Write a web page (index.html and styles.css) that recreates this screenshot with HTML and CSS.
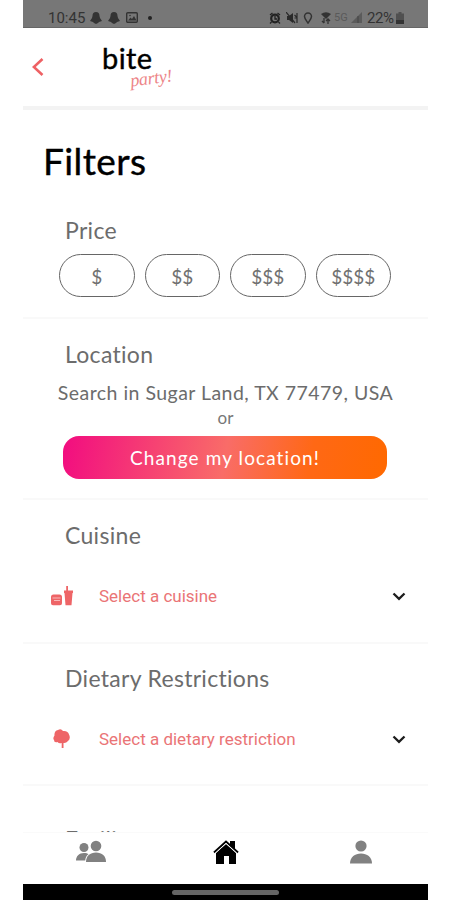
FILE: index.html
```html
<!DOCTYPE html>
<html lang="en">
<head>
  <meta charset="UTF-8" />
  <meta name="viewport" content="width=device-width, initial-scale=1.0" />
  <title>Bite Party - Filters</title>
  <link rel="stylesheet" href="styles.css">
</head>
<body>
  <div class="phone">
    <div class="status-bar">
      <span class="time">10:45</span>
      <svg class="bell" viewBox="0 0 12 12"><path d="M6 0C3.700 0 2.500 1.500 2.500 4L2 6 0 9l3 1 1 1 2 1 2-1 1-1 3-1-2-3-.5-2C9.500 1.500 8.300 0 6 0z"/></svg>
      <svg class="bell" viewBox="0 0 12 12"><path d="M6 0C3.700 0 2.500 1.500 2.500 4L2 6 0 9l3 1 1 1 2 1 2-1 1-1 3-1-2-3-.5-2C9.500 1.500 8.300 0 6 0z"/></svg>
      <svg class="photo" viewBox="0 0 12 11"><rect x=".7" y=".7" width="10.600" height="9.600" rx="1" fill="none" stroke="#333" stroke-width="1.400"/><path d="M2 8.500l2.500-3 1.500 1.500 2-3 2.500 4.500z"/><circle cx="4" cy="3.500" r=".8"/></svg>
      <span class="dot"></span>
      <div class="status-right">
        <svg width="12" height="12" viewBox="0 0 12 12"><circle cx="6" cy="6.500" r="3.800" fill="none" stroke="#222" stroke-width="2.200"/><path d="M6 4v3h2M1 3l2.500-2M11 3L8.500 1M2.500 10L1 11.500M9.500 10l1.500 1.500" fill="none" stroke="#222" stroke-width="1.300"/></svg>
        <svg width="12" height="12" viewBox="0 0 12 12"><path d="M1 4h2l4-3v10L3 8H1z" fill="#2a2a2a"/><path d="M0 0l9 11M8.500 3l2 2M8.500 6h3M11 1v10" fill="none" stroke="#2a2a2a" stroke-width="1.200"/></svg>
        <svg class="pin" width="10" height="12" viewBox="0 0 10 12"><path d="M5 11C3 8 1.500 6.300 1.500 4.500a3.500 3.500 0 0 1 7 0C8.500 6.300 7 8 5 11z" fill="none" stroke="#333" stroke-width="1.500"/></svg>
        <svg class="wifi" width="10" height="12" viewBox="0 0 10 12"><path d="M0 2q5-3.500 10 0L5 7z" fill="#333"/><path d="M3 6v5M1 9l2 2M7 12V7M5 9l2-2 2 2" fill="none" stroke="#333" stroke-width="1.300"/></svg>
        <span class="net">5G</span>
        <svg class="signal" width="11" height="11" viewBox="0 0 11 11"><path d="M0 11L11 0v11z" fill="#5b5b5b"/><path d="M7 4v7" stroke="#444" stroke-width="1"/></svg>
        <span class="battery-text">22%</span>
        <svg width="8" height="12" viewBox="0 0 8 12"><path d="M2.500 0h3v1.500H8V12H0V1.500h2.500z" fill="#505050"/><path d="M0 8h8v4H0z" fill="#333"/></svg>
      </div>
    </div>

    <div class="header">
      <svg class="back" viewBox="0 0 12 18"><path d="M10.500 1L1.800 9l8.700 8" fill="none" stroke="#ee6164" stroke-width="2.600"/></svg>
      <div class="logo">
        <span class="logo-bite">bite</span>
        <span class="logo-party">party!</span>
      </div>
    </div>

    <div class="content">
      <h1>Filters</h1>

      <div class="section price">
        <h2>Price</h2>
        <div class="price-options">
          <div class="pill">$</div>
          <div class="pill">$$</div>
          <div class="pill">$$$</div>
          <div class="pill">$$$$</div>
        </div>
      </div>

      <div class="section location">
        <h2>Location</h2>
        <p class="address">Search in Sugar Land, TX 77479, USA</p>
        <p class="or">or</p>
        <button class="change-btn">Change my location!</button>
      </div>

      <div class="section cuisine">
        <h2>Cuisine</h2>
        <div class="select-row">
          <svg class="select-icon" viewBox="0 0 22 20"><path d="M0 11q0-2.500 2.500-2.500h6Q11 8.500 11 11V17.200q0 2-2 2H2q-2 0-2-2zM13 4.500h2.200V0h1.800v4.500H22V7h-.5l-1 12.200h-6L13.500 7H13z" fill="#ee6567"/><path d="M1.500 12h8M3 14.500h6" stroke="#f9c4c4" stroke-width=".9"/></svg>
          <span>Select a cuisine</span>
          <svg class="chevron" viewBox="0 0 14 9"><path d="M1.500 1.500L7 6.800l5.500-5.300" fill="none" stroke="#1d1d1d" stroke-width="2.300"/></svg>
        </div>
      </div>

      <div class="section dietary">
        <h2>Dietary Restrictions</h2>
        <div class="select-row">
          <svg class="select-icon" viewBox="0 0 22 20"><path d="M7 1Q10-1 12 2q5-.5 6 3.500 2 4-1 6.500-2 2.500-4.500 2V19H10.700v-5Q8 15 6.500 13 3 14 3 11 1.500 9 3.500 6.500 3 2 7 1z" fill="#ee6567"/></svg>
          <span>Select a dietary restriction</span>
          <svg class="chevron" viewBox="0 0 14 9"><path d="M1.500 1.500L7 6.800l5.500-5.300" fill="none" stroke="#1d1d1d" stroke-width="2.300"/></svg>
        </div>
      </div>

      <div class="section next">
        <h2>Facility</h2>
      </div>
    </div>

    <div class="tab-bar">
      <div class="tab">
        <svg width="30" height="23" viewBox="0 0 30 23"><g fill="#818181"><circle cx="8" cy="7.500" r="4.500"/><path d="M0 20.500c0-4 3-7.500 8-7.500 2 0 3.500.4 4.500 1.200-2 1.300-3 3.200-3.300 6.300z"/><circle cx="20" cy="6" r="5.300"/><path d="M10 22c0-6 4-9.500 10-9.500s10 3.500 10 9.500z"/></g></svg>
      </div>
      <div class="tab">
        <svg width="26" height="24" viewBox="0 0 26 24"><path d="M3 13L13 4l10 9v11h-7v-8h-5v8H3zM17 1h5v9l-5-5z"/><path d="M1 12.500L13 1.500l12 11" fill="none" stroke="#000" stroke-width="2"/><path d="M2 13.400L13 3.400l11 10" fill="none" stroke="#fff" stroke-width=".8"/></svg>
      </div>
      <div class="tab">
        <svg width="22" height="24" viewBox="0 0 22 24"><g fill="#818181"><circle cx="11" cy="6" r="5.600"/><path d="M0 23.500C0 17 5 13.500 11 13.500S22 17 22 23.500z"/></g></svg>
      </div>
    </div>
    <div class="nav-bar"><div class="handle"></div></div>
  </div>
</body>
</html>
```
FILE: styles.css
```css
* {
  box-sizing: border-box;
}

body {
  margin: 0;
  background: #fff;
  font-family: Lato, "Liberation Sans", sans-serif;
}

h1, h2, p {
  margin: 0;
  font-weight: normal;
}

.phone {
  width: 405px;
  height: 900px;
  margin-left: 23px;
  display: flex;
  flex-direction: column;
  overflow: hidden;
}

/* status bar */
.status-bar {
  height: 28px;
  flex: none;
  display: flex;
  align-items: center;
  padding: 8px 24px 0 25px;
  background: #777;
  border-bottom: 1px solid #666;
  color: #333;
  fill: #333;
  font-family: Roboto, sans-serif;
  font-size: 15px;
}

.time {
  width: 42px;
}

.bell {
  width: 12px;
  height: 12px;
  margin-right: 6px;
}

.photo {
  width: 12px;
  height: 11px;
}

.dot {
  width: 4px;
  height: 4px;
  margin-left: 10px;
  border-radius: 50%;
  background: #222;
}

.status-right {
  margin-left: auto;
  display: flex;
  align-items: center;
}

.status-right svg {
  margin-right: 5px;
}

.status-right .wifi {
  margin: 0 3px;
}

.net {
  width: 17px;
  font-size: 11px;
  color: #5a5a5a;
}

.battery-text {
  width: 29px;
  letter-spacing: -0.4px;
}

.status-right svg:last-child {
  margin-right: 0;
}

/* header */
.header {
  height: 82px;
  flex: none;
  display: flex;
  padding-left: 9px;
  border-bottom: 4px solid #f3f3f3;
}

.back {
  width: 12px;
  height: 18px;
  margin-top: 30px;
}

.logo {
  display: flex;
  flex-direction: column;
  width: 76px;
  margin: 14px 0 0 58px;
}

.logo-bite {
  font-size: 29px;
  line-height: 32px;
  letter-spacing: 0.4px;
  color: #000;
  -webkit-text-stroke: 0.4px #000;
}

.logo-party {
  align-self: flex-end;
  margin-top: -6px;
  margin-right: 6px;
  font-family: "Liberation Serif", serif;
  font-style: italic;
  font-size: 18px;
  line-height: 20px;
  letter-spacing: -0.3px;
  color: #ed8588;
  transform: rotate(-7deg);
}

/* filters */
.content {
  flex: 1;
  min-height: 0;
  overflow: hidden;
}

h1 {
  height: 98px;
  padding: 29px 0 0 20px;
  font-size: 37px;
  line-height: 44px;
  letter-spacing: 0.4px;
  color: #000;
  -webkit-text-stroke: 0.4px #000;
}

h2 {
  padding-left: 42px;
  font-size: 23px;
  line-height: 28px;
  letter-spacing: 0.3px;
  color: #6c6c6c;
}

.section {
  border-bottom: 2px solid #f9f9f9;
}

.price {
  height: 111px;
  padding-top: 8px;
}

.price-options {
  display: flex;
  gap: 10px;
  padding: 10px 0 0 36px;
}

.pill {
  width: 75.5px;
  height: 43px;
  border: 1px solid #666;
  border-radius: 22px;
  text-align: center;
  font-size: 19px;
  line-height: 43px;
  color: #707070;
}

.location {
  height: 181px;
  padding-top: 21px;
}

.address {
  margin-top: 12px;
  text-align: center;
  font-size: 19.5px;
  line-height: 26px;
  letter-spacing: 0.47px;
  white-space: nowrap;
  color: #6c6c6c;
}

.or {
  text-align: center;
  font-size: 17px;
  line-height: 24px;
  color: #777;
}

.change-btn {
  display: block;
  width: 324px;
  height: 43px;
  margin: 6px 0 0 40px;
  border: none;
  border-radius: 16px;
  background: linear-gradient(100deg, #f20c80, #f96c68 50%, #ff6815 76%, #ff6900);
  color: #fff;
  font-family: inherit;
  font-size: 19px;
  letter-spacing: 1.1px;
}

.cuisine {
  height: 144px;
  padding-top: 21px;
}

.dietary {
  height: 142px;
  padding-top: 20px;
}

.select-row {
  display: flex;
  align-items: center;
  height: 30px;
  margin-top: 32px;
  padding: 0 22px 0 28px;
  font-family: Roboto, sans-serif;
  font-size: 17px;
  color: #ea7476;
}

.select-icon {
  width: 22px;
  height: 20px;
  margin-right: 26px;
}

.chevron {
  width: 14px;
  height: 9px;
  margin-left: auto;
}

.next {
  padding-top: 39px;
}

/* bottom bar */
.tab-bar {
  flex: none;
  display: flex;
  height: 52px;
  border-top: 1px solid #fafafa;
  background: #fff;
}

.tab {
  flex: 1;
  padding-top: 7px;
  text-align: center;
}

.nav-bar {
  height: 16px;
  flex: none;
  padding-top: 6px;
  background: #000;
}

.handle {
  width: 107px;
  height: 5px;
  margin: 0 auto;
  border-radius: 3px;
  background: #656565;
}
```
